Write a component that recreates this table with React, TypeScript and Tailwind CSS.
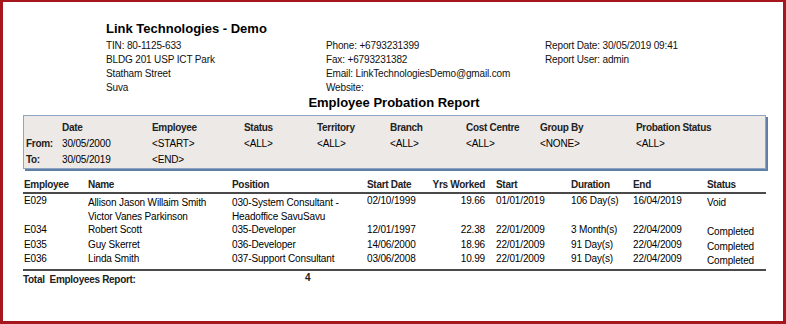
import React from "react";

const F = { fontFamily: '"Liberation Sans", Arial, sans-serif' };

const filterCols = ["w-[36px]", "w-[90px]", "w-[92px]", "w-[73px]", "w-[73px]", "w-[76px]", "w-[74px]", "w-[96px]", "flex-1"];
const tableCols = ["w-[64px]", "w-[144px]", "w-[135px]", "w-[66px]", "w-[52px]", "w-[86px] pl-[11px]", "w-[62px]", "w-[74px]", "flex-1"];

type Row = {
  id: string;
  name: string[];
  pos: string[];
  sd: string;
  yrs: string;
  start: string;
  dur: string;
  end: string;
  status: string;
  first: boolean;
  h: string;
};

const rows: Row[] = [
  { id: "E029", name: ["Allison Jason Willaim Smith", "Victor Vanes Parkinson"], pos: ["030-System Consultant -", "Headoffice SavuSavu"], sd: "02/10/1999", yrs: "19.66", start: "01/01/2019", dur: "106 Day(s)", end: "16/04/2019", status: "Void", first: true, h: "h-[29px]" },
  { id: "E034", name: ["Robert Scott"], pos: ["035-Developer"], sd: "12/01/1997", yrs: "22.38", start: "22/01/2009", dur: "3 Month(s)", end: "22/04/2009", status: "Completed", first: false, h: "h-[15px]" },
  { id: "E035", name: ["Guy Skerret"], pos: ["036-Developer"], sd: "14/06/2000", yrs: "18.96", start: "22/01/2009", dur: "91 Day(s)", end: "22/04/2009", status: "Completed", first: false, h: "h-[14px]" },
  { id: "E036", name: ["Linda Smith"], pos: ["037-Support Consultant"], sd: "03/06/2008", yrs: "10.99", start: "22/01/2009", dur: "91 Day(s)", end: "22/04/2009", status: "Completed", first: false, h: "h-[14px]" },
];

export default function App() {
  const hdr = ["", "Date", "Employee", "Status", "Territory", "Branch", "Cost Centre", "Group By", "Probation Status"];
  const from = ["From:", "30/05/2000", "<START>", "<ALL>", "<ALL>", "<ALL>", "<ALL>", "<NONE>", "<ALL>"];
  const to = ["To:", "30/05/2019", "<END>", "", "", "", "", "", ""];
  const thead = ["Employee", "Name", "Position", "Start Date", "Yrs Worked", "Start", "Duration", "End", "Status"];

  return (
    <div style={F} className="w-[786px] h-[324px] bg-white border-[#a5161d] border-t-2 border-x-[3px] border-b-[3px] text-black overflow-hidden">
      <div className="pt-[19px] pl-[103px]">
        <div className="text-[13px] font-bold leading-[16px] h-[16px]">Link Technologies - Demo</div>
        <div className="mt-[2px] flex text-[10px] leading-[14px] tracking-[-0.15px] text-[#111]">
          <div className="w-[220px]">
            <div>TIN: 80-1125-633</div>
            <div>BLDG 201 USP ICT Park</div>
            <div>Statham Street</div>
            <div>Suva</div>
          </div>
          <div className="w-[219px]">
            <div>Phone: +6793231399</div>
            <div>Fax: +6793231382</div>
            <div>Email: LinkTechnologiesDemo@gmail.com</div>
            <div>Website:</div>
          </div>
          <div>
            <div>Report Date: 30/05/2019 09:41</div>
            <div>Report User: admin</div>
          </div>
        </div>
      </div>
      <div className="text-center text-[13px] font-bold leading-[16px] h-[16px] pl-[2px]">Employee Probation Report</div>

      <div className="ml-[20px] mt-[4px] w-[743px] h-[54px] bg-[#ece9e6] border border-[#8ea5c2] shadow-[2px_2px_0_#5f7fa8] pt-[4px] pl-[2px]">
        <div className="flex h-[16px] leading-[16px] text-[10px] font-bold tracking-[-0.3px] text-[#222]">
          {hdr.map((h, i) => (
            <div key={i} className={filterCols[i]}>{h}</div>
          ))}
        </div>
        {[from, to].map((r, ri) => (
          <div key={ri} className="flex h-[16px] leading-[16px] text-[10px] tracking-[-0.15px]">
            {r.map((v, i) => (
              <div key={i} className={`${filterCols[i]} ${i === 0 ? "font-bold tracking-[-0.3px] text-[#222]" : ""}`}>{v}</div>
            ))}
          </div>
        ))}
      </div>

      <div className="ml-[20px] w-[743px] mt-[9px]">
        <div className="flex h-[16px] leading-[14px] text-[10px] font-bold tracking-[-0.3px] pl-[1px] border-b-2 border-[#4a4a4a] text-[#222]">
          {thead.map((h, i) => (
            <div key={i} className={`${tableCols[i]} whitespace-nowrap ${i === 4 ? "flex justify-end" : ""}`}>
              <span>{h}</span>
            </div>
          ))}
        </div>
        <div className="text-[10px] leading-[14px] tracking-[-0.15px] pl-[1px] pb-[3px] border-b-2 border-[#4a4a4a]">
          {rows.map((r) => (
            <div key={r.id} className={`flex ${r.h}`}>
              <div className={tableCols[0]}>{r.id}</div>
              <div className={`${tableCols[1]} ${r.first ? "pt-[2px]" : ""}`}>
                {r.name.map((n) => <div key={n}>{n}</div>)}
              </div>
              <div className={`${tableCols[2]} ${r.first ? "pt-[2px]" : ""}`}>
                {r.pos.map((n) => <div key={n}>{n}</div>)}
              </div>
              <div className={tableCols[3]}>{r.sd}</div>
              <div className={`${tableCols[4]} text-right`}>{r.yrs}</div>
              <div className={tableCols[5]}>{r.start}</div>
              <div className={tableCols[6]}>{r.dur}</div>
              <div className={tableCols[7]}>{r.end}</div>
              <div className={`${tableCols[8]} pt-[2px]`}>{r.status}</div>
            </div>
          ))}
        </div>
        <div className="flex text-[10px] font-bold tracking-[-0.3px] leading-[14px] text-[#222]">
          <div className="w-[282px] pt-[2px]">Total&nbsp; Employees Report:</div>
          <div>4</div>
        </div>
      </div>
    </div>
  );
}
